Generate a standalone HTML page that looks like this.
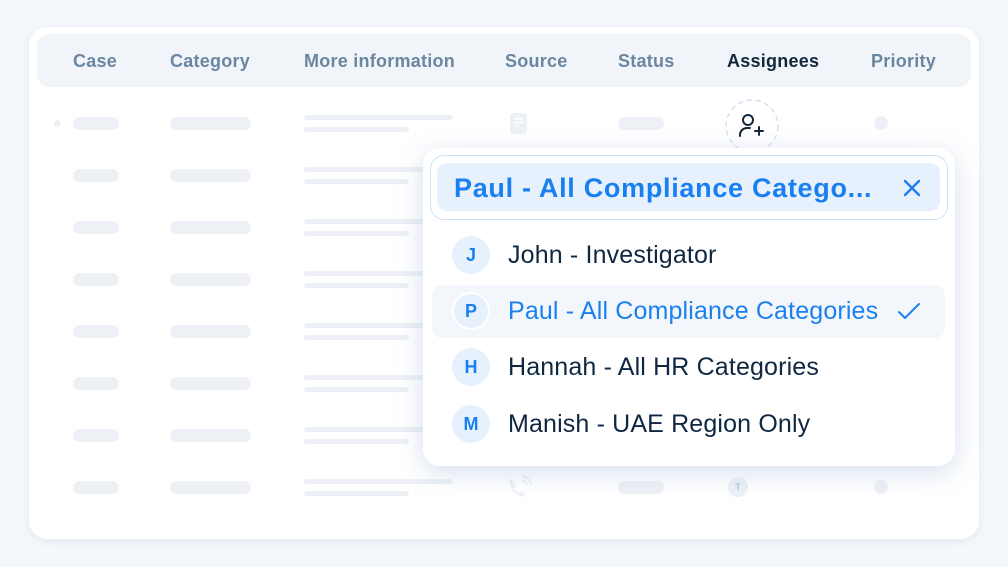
<!DOCTYPE html>
<html><head><meta charset="utf-8"><style>
*{margin:0;padding:0;box-sizing:border-box}
body{width:1008px;height:567px;background:#f4f8fb;position:relative;overflow:hidden;font-family:"Liberation Sans",sans-serif}
.a{position:absolute}
.card{left:29px;top:27px;width:950px;height:512px;background:#fff;border-radius:18px;box-shadow:0 2px 8px rgba(180,200,225,.35)}
.hdr{left:37px;top:34px;width:934px;height:53px;background:#f1f5f9;border-radius:13px}
.h{top:51px;font-size:18px;color:#6a86a1;font-weight:bold;letter-spacing:0.25px;white-space:nowrap}
.bar{background:#edf1f6;border-radius:7px;height:13px}
.ln{background:#edf1f6;border-radius:3px;height:5px}
.dd{left:423px;top:148px;width:532px;height:318px;background:#fff;border-radius:17px;box-shadow:0 6px 26px rgba(160,185,215,.45)}
.inp{left:430px;top:155px;width:518px;height:65px;border:1.5px solid #cfe0f3;border-radius:14px}
.inn{left:437px;top:163px;width:503px;height:48px;background:#e6f1fd;border-radius:10px}
.av{width:38px;height:38px;border-radius:50%;background:#e6f1fd;color:#1a80ef;font-weight:bold;font-size:18px;text-align:center;line-height:38px;left:452px}
.it{left:508px;font-size:25px;color:#0f2740;letter-spacing:0.15px;white-space:nowrap}
</style></head><body>
<div class="a card"></div>
<div class="a hdr"></div>
<div class="a h" style="left:73px">Case</div>
<div class="a h" style="left:170px">Category</div>
<div class="a h" style="left:304px">More information</div>
<div class="a h" style="left:505px">Source</div>
<div class="a h" style="left:618px">Status</div>
<div class="a h" style="left:727px;color:#12283d">Assignees</div>
<div class="a h" style="left:871px">Priority</div>

<div class="a" style="left:54px;top:120px;width:7px;height:7px;border-radius:50%;background:#edf1f6"></div>
<div id="rows"></div>
<script>
var h='';[123,175,227,279,331,383,435,487].forEach(function(y){
h+='<div class="a bar" style="left:73px;top:'+(y-6)+'px;width:46px"></div>';
h+='<div class="a bar" style="left:170px;top:'+(y-6)+'px;width:81px"></div>';
h+='<div class="a ln" style="left:304px;top:'+(y-8)+'px;width:149px"></div>';
h+='<div class="a ln" style="left:304px;top:'+(y+4)+'px;width:105px"></div>';
});
h+='<div class="a bar" style="left:618px;top:117px;width:46px"></div>';
h+='<div class="a bar" style="left:618px;top:481px;width:46px"></div>';
h+='<div class="a" style="left:874px;top:116px;width:14px;height:14px;border-radius:50%;background:#edf1f6"></div>';
h+='<div class="a" style="left:874px;top:480px;width:14px;height:14px;border-radius:50%;background:#edf1f6"></div>';
h+='<svg class="a" style="left:510px;top:113px" width="17" height="21" viewBox="0 0 17 21"><rect width="17" height="21" rx="3" fill="#edf1f6"/><path d="M4 6h9M4 9.5h9M4 13h5" stroke="#fff" stroke-width="1.6"/></svg>';
h+='<div class="a" style="left:728px;top:477px;width:20px;height:20px;border-radius:50%;background:#edf1f6;color:#a8c4e6;font-size:9px;font-weight:bold;text-align:center;line-height:20px">T</div>';
document.getElementById('rows').innerHTML=h;
</script>
<svg class="a" style="left:505px;top:474px" width="28" height="28" viewBox="0 0 28 28"><path d="M6 5c-2 1-2 4 0 8s6 8 9 9c2 1 4 0 5-2l-4-3-2 2c-2-1-4-3-5-5l2-2-3-4z" fill="#edf1f6"/><path d="M17 6a6 6 0 0 1 5 5M17 2a10 10 0 0 1 9 9" stroke="#edf1f6" stroke-width="2" fill="none"/></svg>

<svg class="a" style="left:724px;top:98px" width="56" height="56" viewBox="0 0 56 56"><circle cx="28" cy="28" r="26" fill="none" stroke="#c9daef" stroke-width="1.2" stroke-dasharray="5 4"/><circle cx="24" cy="22" r="5" fill="none" stroke="#12283d" stroke-width="2"/><path d="M16 38v-2a7 7 0 0 1 7-6h3" fill="none" stroke="#12283d" stroke-width="2" stroke-linecap="round"/><path d="M35 29v8M31 33h8" stroke="#12283d" stroke-width="2" stroke-linecap="round"/></svg>

<div class="a dd"></div>
<div class="a inp"></div>
<div class="a inn"></div>
<div class="a" style="left:454px;top:173px;font-size:27px;font-weight:bold;color:#1a80ef;letter-spacing:0.7px;white-space:nowrap">Paul - All Compliance Catego...</div>
<svg class="a" style="left:903px;top:179px" width="18" height="18" viewBox="0 0 18 18"><path d="M2 2l14 14M16 2L2 16" stroke="#1a80ef" stroke-width="2.4" stroke-linecap="round"/></svg>

<div class="a" style="left:432px;top:285px;width:513px;height:53px;background:#f3f7fb;border-radius:10px"></div>
<div class="a av" style="top:236px">J</div>
<div class="a it" style="top:241px">John - Investigator</div>
<div class="a av" style="top:292px;border:2px solid #fff;line-height:34px">P</div>
<div class="a it" style="top:297px;color:#1a80ef">Paul - All Compliance Categories</div>
<svg class="a" style="left:897px;top:301px" width="24" height="20" viewBox="0 0 24 20"><path d="M2 11l6 6L22 3" stroke="#1a80ef" stroke-width="2" fill="none" stroke-linecap="round" stroke-linejoin="round"/></svg>
<div class="a av" style="top:348px">H</div>
<div class="a it" style="top:353px">Hannah - All HR Categories</div>
<div class="a av" style="top:405px">M</div>
<div class="a it" style="top:410px">Manish - UAE Region Only</div>
</body></html>
